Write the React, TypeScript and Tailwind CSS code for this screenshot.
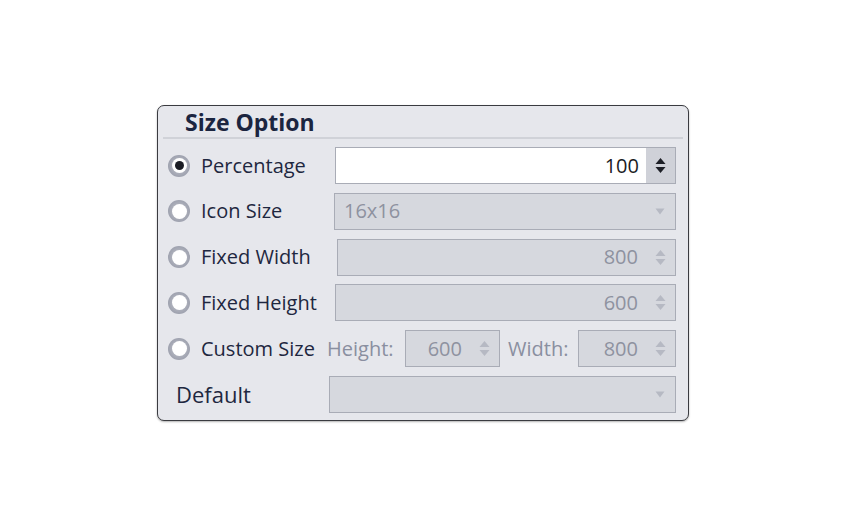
import React from "react";

const font = { fontFamily: '"Open Sans", "Noto Sans", "Liberation Sans", sans-serif' };

function Radio({ checked }: { checked?: boolean }) {
  return (
    <span className="flex h-[22px] w-[22px] items-center justify-center rounded-full bg-[radial-gradient(circle,#c7c9d1_0%,#8d91a0_100%)]">
      <span className="flex h-[15px] w-[15px] items-center justify-center rounded-full bg-white">
        {checked && <span className="h-[9px] w-[9px] rounded-full bg-[#1b1d24]" />}
      </span>
    </span>
  );
}

function Spin({ dark }: { dark?: boolean }) {
  const c = dark ? "#1d1f26" : "#b6b9c3";
  return (
    <svg width="11" height="17" viewBox="0 0 11 17">
      <path d="M5.5 1 L10.5 7 H0.5 Z" fill={c} />
      <path d="M5.5 16 L10.5 10 H0.5 Z" fill={c} />
    </svg>
  );
}

function Caret() {
  return (
    <svg width="10" height="7" viewBox="0 0 10 7">
      <path d="M0.5 0.5 H9.5 L5 6.5 Z" fill="#b6b9c3" />
    </svg>
  );
}

function Row({ label, checked, children }: { label: string; checked?: boolean; children: React.ReactNode }) {
  return (
    <div className="flex h-[37px] items-center">
      <div className="flex w-[165px] items-center gap-[11px]">
        <Radio checked={checked} />
        <span className="text-[20px] text-[#1e2740]">{label}</span>
      </div>
      {children}
    </div>
  );
}

function DisabledNum({ value, className }: { value: string; className: string }) {
  return (
    <div className={`flex h-[37px] items-center border border-[#a9acb6] bg-[#d6d8de] ${className}`}>
      <span className="flex-1 pr-[8px] text-right text-[20px] text-[#8e92a0]">{value}</span>
      <span className="flex w-[29px] justify-center">
        <Spin />
      </span>
    </div>
  );
}

export default function App() {
  return (
    <div className="min-h-[526px] bg-white pl-[157px] pt-[105px]" style={font}>
      <div className="flex h-[316px] w-[532px] flex-col rounded-[7px] border border-[#3a3b40] bg-[#e6e7ec] shadow-[0_1px_2px_rgba(0,0,0,0.3)]">
        <div className="mx-[5px] flex h-[33px] items-end border-b-2 border-[#d0d2d8] pl-[22px]">
          <span className="text-[23px] font-bold leading-[30px] text-[#1b2540]">Size Option</span>
        </div>
        <div className="flex flex-col gap-[8.8px] pl-[10px] pr-[12px] pt-[8px]">
          <Row label="Percentage" checked>
            <div className="ml-[2px] flex h-[37px] flex-1 border border-[#a9acb6] bg-white">
              <span className="flex flex-1 items-center justify-end pr-[7px] text-[20px] text-[#1b1d24]">100</span>
              <span className="flex w-[29px] items-center justify-center bg-[#cfd1d8]">
                <Spin dark />
              </span>
            </div>
          </Row>
          <Row label="Icon Size">
            <div className="ml-[1px] flex h-[37px] flex-1 items-center border border-[#a9acb6] bg-[#d6d8de] pl-[9px] pr-[10px]">
              <span className="flex-1 text-[20px] text-[#8e92a0]">16x16</span>
              <Caret />
            </div>
          </Row>
          <Row label="Fixed Width">
            <DisabledNum value="800" className="ml-[4px] flex-1" />
          </Row>
          <Row label="Fixed Height">
            <DisabledNum value="600" className="ml-[2px] flex-1" />
          </Row>
          <Row label="Custom Size">
            <div className="-ml-[6px] flex flex-1 items-center">
              <span className="w-[78px] text-[20px] text-[#8a8fa0]">Height:</span>
              <DisabledNum value="600" className="w-[95px]" />
              <span className="ml-[8px] w-[70px] text-[20px] text-[#8a8fa0]">Width:</span>
              <DisabledNum value="800" className="flex-1" />
            </div>
          </Row>
          <div className="flex h-[37px] items-center">
            <span className="w-[161px] pl-[8px] text-[22px] text-[#1e2740]">Default</span>
            <div className="flex h-[37px] flex-1 items-center justify-end border border-[#a9acb6] bg-[#d6d8de] pr-[10px]">
              <Caret />
            </div>
          </div>
        </div>
      </div>
    </div>
  );
}
